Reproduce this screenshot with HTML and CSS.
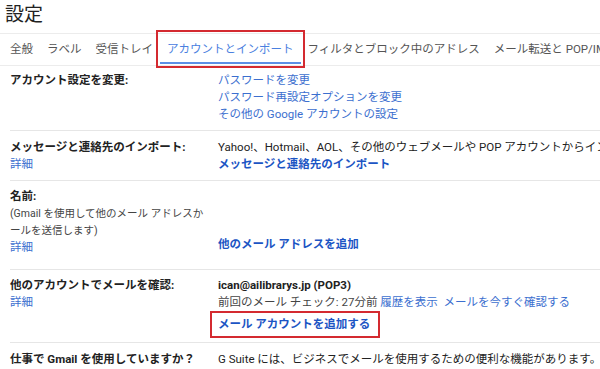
FILE: index.html
```html
<!DOCTYPE html>
<html lang="ja">
<head>
    <meta charset="UTF-8">
    <title>設定</title>
    <link rel="stylesheet" href="styles.css">
</head>
<body>

<h1 class="title">設定</h1>

<div class="tabs">
    <span class="tab">全般</span>
    <span class="tab">ラベル</span>
    <span class="tab">受信トレイ</span>
    <span class="tab active">アカウントとインポート</span>
    <span class="tab">フィルタとブロック中のアドレス</span>
    <span class="tab">メール転送と POP/IMAP</span>
</div>

<div class="rows">
    <div class="row first">
        <div class="label"><b>アカウント設定を変更:</b></div>
        <div class="value">
            <a class="link">パスワードを変更</a><br>
            <a class="link">パスワード再設定オプションを変更</a><br>
            <a class="link">その他の Google アカウントの設定</a>
        </div>
    </div>

    <div class="row">
        <div class="label">
            <b>メッセージと連絡先のインポート:</b><br>
            <a class="link">詳細</a>
        </div>
        <div class="value">
            Yahoo!、Hotmail、AOL、その他のウェブメールや POP アカウントからインポートします。<br>
            <a class="link strong">メッセージと連絡先のインポート</a>
        </div>
    </div>

    <div class="row name">
        <div class="label">
            <b>名前:</b><br>
            <span class="note">(Gmail を使用して他のメール アドレスか</span><br>
            <span class="note">ールを送信します)</span><br>
            <a class="link">詳細</a>
        </div>
        <div class="value push">
            <a class="link strong">他のメール アドレスを追加</a>
        </div>
    </div>

    <div class="row check">
        <div class="label">
            <b>他のアカウントでメールを確認:</b><br>
            <a class="link">詳細</a>
        </div>
        <div class="value">
            <b>ican@ailibrarys.jp (POP3)</b><br>
            <span class="muted">前回のメール チェック: 27分前</span>
            <a class="link">履歴を表示</a>&nbsp;
            <a class="link">メールを今すぐ確認する</a><br>
            <span class="marked"><a class="link strong">メール アカウントを追加する</a></span>
        </div>
    </div>

    <div class="row">
        <div class="label"><b>仕事で Gmail を使用していますか？</b></div>
        <div class="value">G Suite には、ビジネスでメールを使用するための便利な機能があります。</div>
    </div>
</div>

</body>
</html>
```

FILE: styles.css
```css
html,body{
    height: 100%;
}
body{
    margin: 0;
    overflow: hidden;
    background: #fff;
    color: #222;
    font-family: Roboto, "Noto Sans CJK JP", sans-serif;
    font-size: 11.5px;
    line-height: 17px;
    white-space: nowrap;
}

.title{
    margin: 0;
    height: 33px;
    padding-left: 5px;
    font-size: 19px;
    font-weight: normal;
    line-height: 29px;
    color: #222;
}

.tabs{
    display: flex;
    height: 31px;
    padding-left: 3px;
    border-top: 1px solid #ececec;
    border-bottom: 1px solid #ececec;
    font-size: 11.5px;
}

.tab{
    padding: 0 7px;
    height: 28px;
    line-height: 30px;
    color: #555;
}

.tab.active{
    color: #4a80e0;
    border-bottom: 2px solid #5b8fe6;
    outline: 2px solid #d42a30;
    outline-offset: 2px;
}

.rows{
    padding-left: 10px;
}

.row{
    display: grid;
    grid-template-columns: 208px 1fr;
    padding: 8px 0 7px;
    border-bottom: 1px solid #e6e6e6;
}

.row.first{
    padding-top: 6px;
}

.row.name{
    padding-top: 7px;
    padding-bottom: 13px;
}

.row.check{
    padding-top: 7px;
    padding-bottom: 4px;
}

.label b,
.value b{
    font-weight: bold;
}

.note{
    font-size: 10.5px;
    color: #444;
}

.value.push{
    padding-top: 48px;
}

.link{
    color: #3c6fcf;
    text-decoration: none;
}

.link.strong{
    color: #1c55c4;
    font-weight: bold;
}

.muted{
    color: #444;
}

.marked{
    display: inline-block;
    margin-left: -8px;
    padding: 3px 8px 3px 6px;
    border: 2px solid #d42a30;
}
```
